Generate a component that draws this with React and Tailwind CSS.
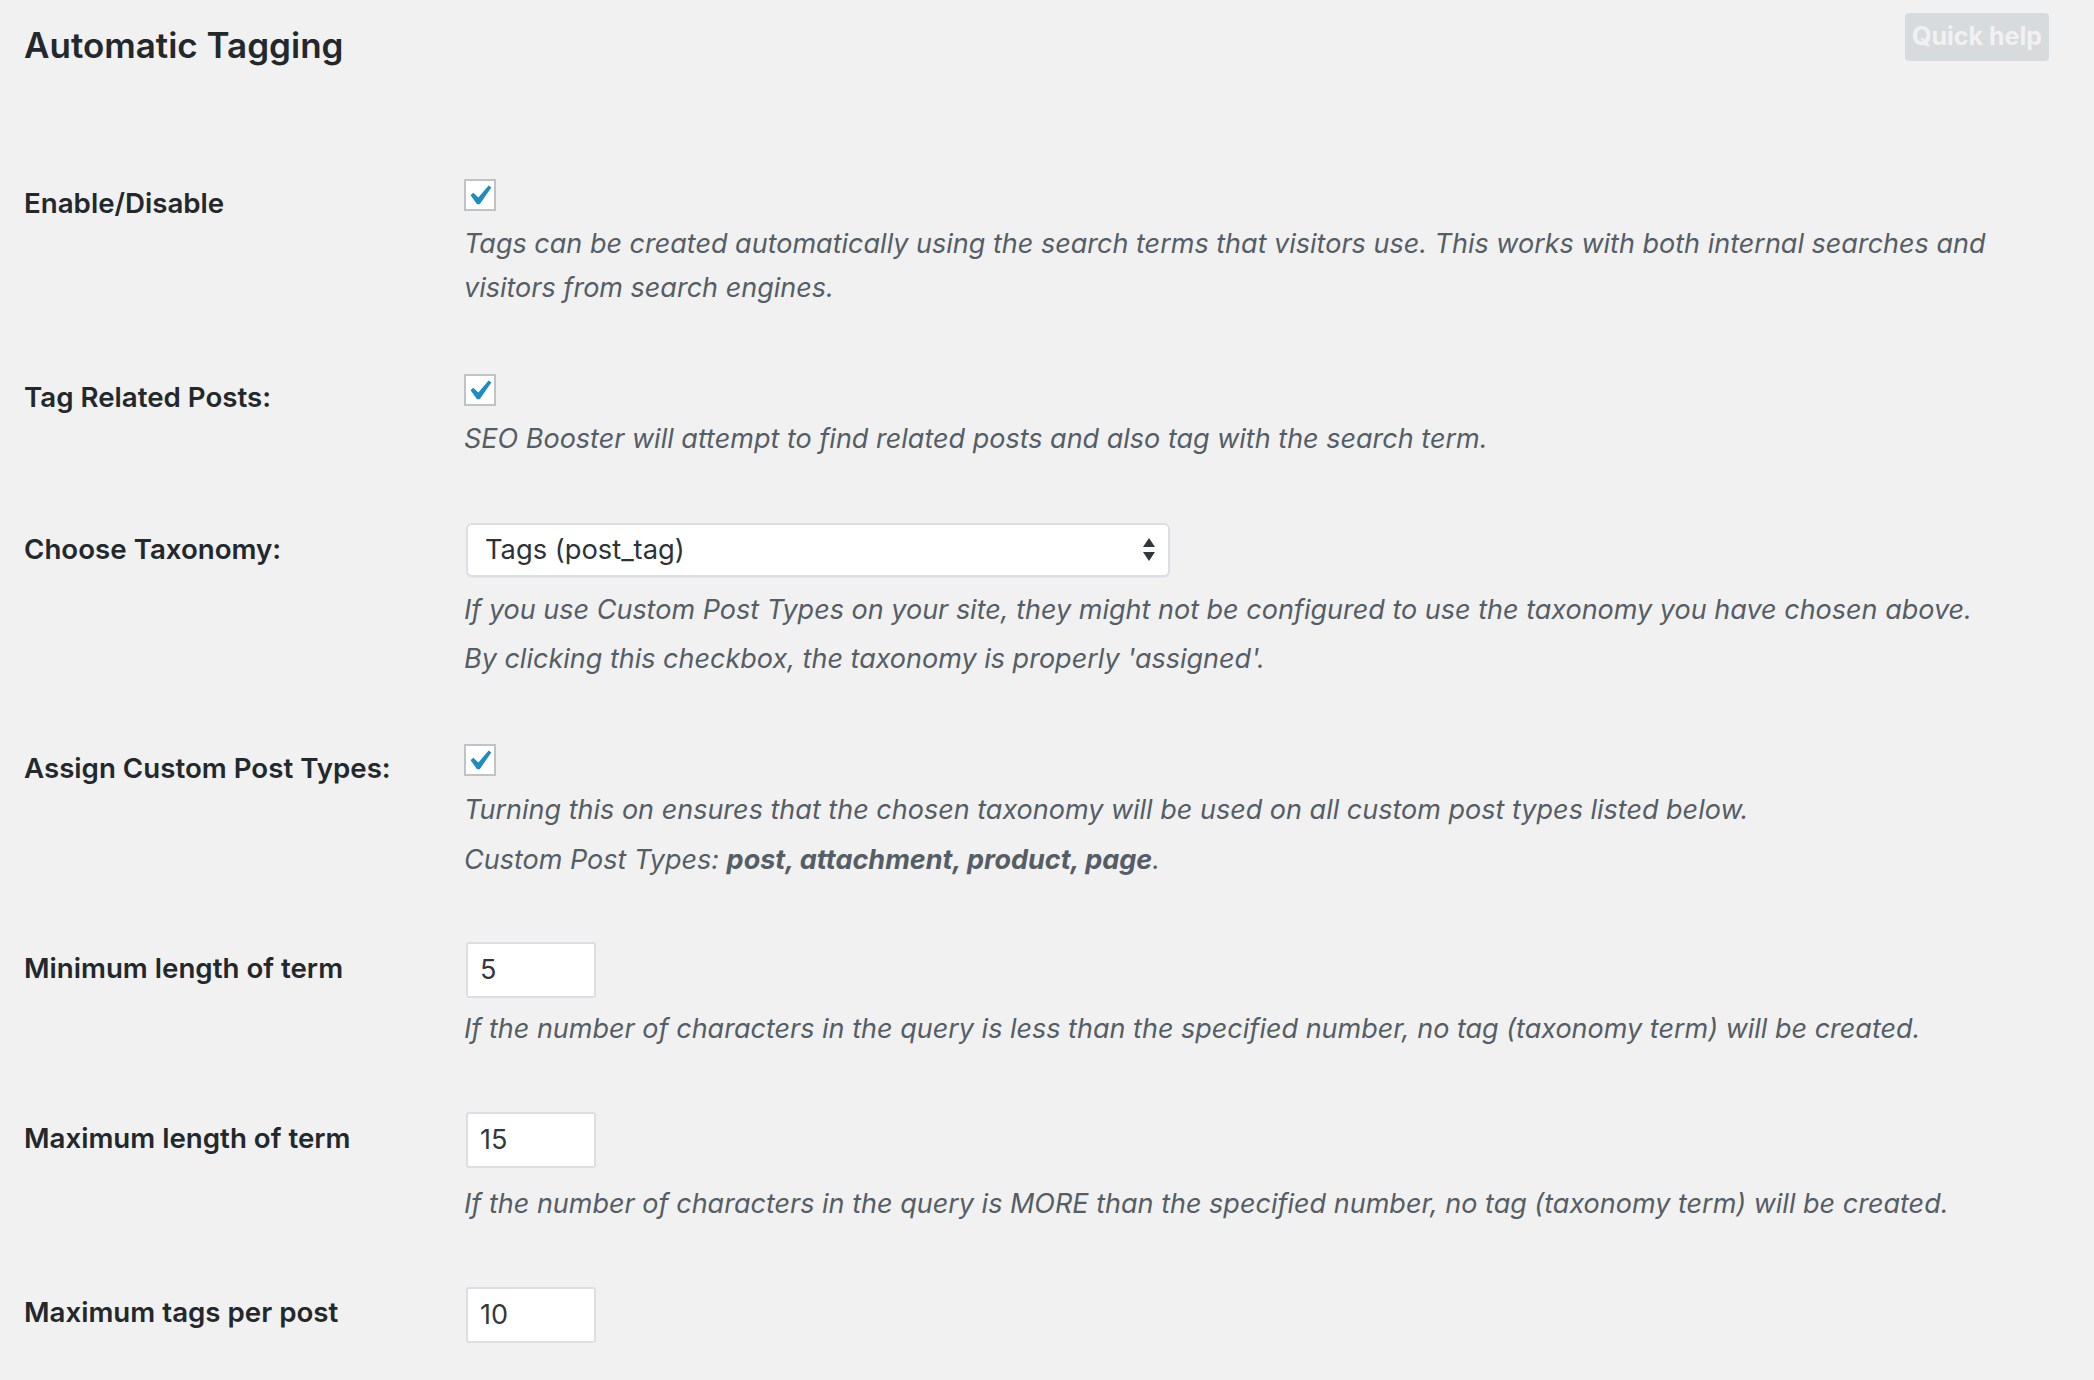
import React from 'react';

const font = { fontFamily: 'Inter, "Noto Sans", sans-serif' };

function Check() {
  return (
    <div className="w-[32px] h-[32px] border-2 border-[#c0c3c6] bg-white flex items-center justify-center pl-[2px]">
      <svg width="22" height="20" viewBox="5.5 4.6 11 10">
        <path d="M14.83 4.89l1.34.94-5.81 8.38H9.02L5.78 9.67l1.34-1.25 2.57 2.4z" fill="#1e8cbe" />
      </svg>
    </div>
  );
}

function NumInput({ value }) {
  return (
    <div className="ml-[2px] w-[130px] h-[56px] border-2 border-[#dcdee1] bg-white rounded-[3px] flex items-center pl-[12px] text-[27px] text-[#32373c]">
      {value}
    </div>
  );
}

function Row({ label, mt, pt, children }) {
  return (
    <div className={`flex ${mt}`}>
      <div className={`w-[440px] shrink-0 ${pt} text-[27.7px] leading-[36px] font-semibold text-[#23282d]`}>{label}</div>
      <div className="flex-1">{children}</div>
    </div>
  );
}

const desc = 'text-[27px] leading-[44px] italic text-[#555d66]';

export default function App() {
  return (
    <div className="min-h-[1380px] bg-[#f1f1f1] pl-[24px] pr-[45px]" style={font}>
      <div className="flex justify-between items-start">
        <h1 className="mt-[23px] text-[35px] leading-[44px] font-semibold text-[#23282d]">Automatic Tagging</h1>
        <button className="mt-[13px] h-[48px] px-[7px] rounded-[4px] bg-[#d8dbde] text-[#f1f1f1] text-[25px] font-bold">Quick help</button>
      </div>

      <Row label="Enable/Disable" mt="mt-[112px]" pt="pt-[6px]">
        <Check />
        <p className={`${desc} mt-[11px]`}>
          Tags can be created automatically using the search terms that visitors use. This works with both internal searches and<br />
          visitors from search engines.
        </p>
      </Row>

      <Row label="Tag Related Posts:" mt="mt-[64px]" pt="pt-[5px]">
        <Check />
        <p className={`${desc} mt-[11px]`}>SEO Booster will attempt to find related posts and also tag with the search term.</p>
      </Row>

      <Row label="Choose Taxonomy:" mt="mt-[62px]" pt="pt-[8px]">
        <div className="w-[704px] h-[54px] ml-[2px] border-2 border-[#dcdee1] rounded-[6px] bg-white flex items-center justify-between pl-[17px] pr-[12px] text-[27.3px] text-[#2c3338] shadow-[0_1px_1px_rgba(0,0,0,0.04)]">
          <span>Tags (post_tag)</span>
          <svg width="14" height="26" viewBox="0 0 14 26">
            <path d="M7 1 L13 10 L1 10 Z" fill="#32373c" />
            <path d="M1 15 L13 15 L7 24 Z" fill="#32373c" />
          </svg>
        </div>
        <p className={`${desc} mt-[11px]`}>If you use Custom Post Types on your site, they might not be configured to use the taxonomy you have chosen above.</p>
        <p className={`${desc} mt-[5px]`}>By clicking this checkbox, the taxonomy is properly 'assigned'.</p>
      </Row>

      <Row label="Assign Custom Post Types:" mt="mt-[63px]" pt="pt-[6px]">
        <Check />
        <p className={`${desc} mt-[12px]`}>Turning this on ensures that the chosen taxonomy will be used on all custom post types listed below.</p>
        <p className={`${desc} mt-[6px]`}>
          Custom Post Types: <b className="font-bold">post, attachment, product, page</b>.
        </p>
      </Row>

      <Row label="Minimum length of term" mt="mt-[60px]" pt="pt-[8px]">
        <NumInput value="5" />
        <p className={`${desc} mt-[9px]`}>If the number of characters in the query is less than the specified number, no tag (taxonomy term) will be created.</p>
      </Row>

      <Row label="Maximum length of term" mt="mt-[61px]" pt="pt-[8px]">
        <NumInput value="15" />
        <p className={`${desc} mt-[14px]`}>If the number of characters in the query is MORE than the specified number, no tag (taxonomy term) will be created.</p>
      </Row>

      <Row label="Maximum tags per post" mt="mt-[61px]" pt="pt-[7px]">
        <NumInput value="10" />
      </Row>
    </div>
  );
}
